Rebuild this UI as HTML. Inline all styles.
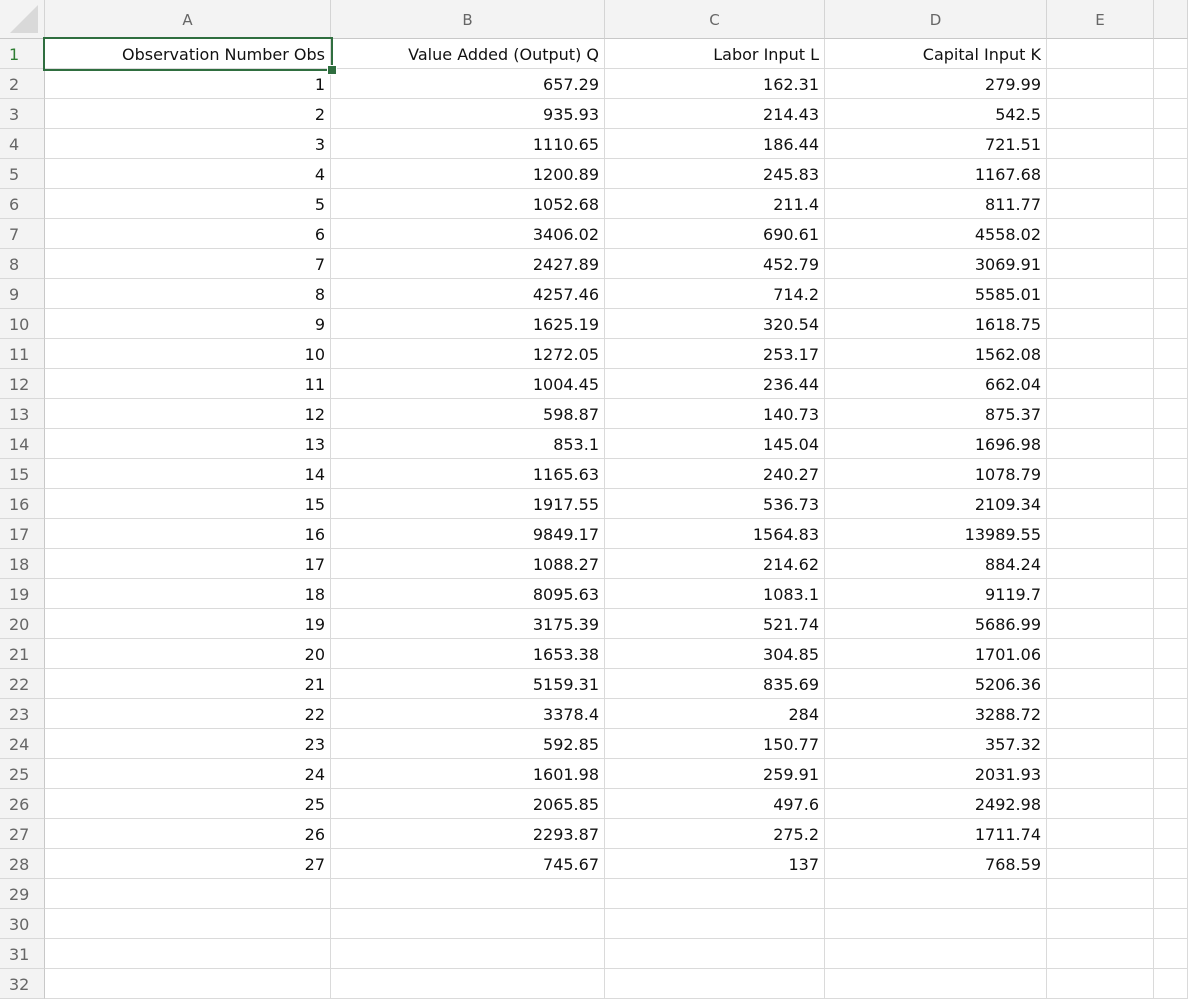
<!DOCTYPE html>
<html><head><style>
body{margin:0;width:1188px;height:1000px;overflow:hidden;background:#fff;font-family:"DejaVu Sans",sans-serif;position:relative}
.h{position:absolute;top:0;height:39px;background:#f3f3f3;border-right:1px solid #d4d4d4;border-bottom:1px solid #c8c8c8;box-sizing:border-box;text-align:center;line-height:40px;color:#666;font-size:15px}
.r{position:absolute;left:0;width:45px;height:30px;background:#f3f3f3;border-right:1px solid #c8c8c8;border-bottom:1px solid #d8d8d8;box-sizing:border-box;color:#666;font-size:16px;line-height:31px;padding-left:9px}
.c{position:absolute;height:30px;border-right:1px solid #dadada;border-bottom:1px solid #dadada;box-sizing:border-box;text-align:right;padding-right:5px;font-size:16px;line-height:31px;color:#111;white-space:nowrap}
</style></head><body>
<div id="g"></div>
<script>
var cols=[[45,331],[331,605],[605,825],[825,1047],[1047,1154],[1154,1188]];
var L=['A','B','C','D','E',''];
var h='<div class="h" style="left:0;width:45px"><svg width="45" height="39" style="position:absolute;left:0;top:0"><polygon points="10,33 38,33 38,5" fill="#d9d9d9"/></svg></div>';
cols.forEach(function(c,i){h+='<div class="h" style="left:'+c[0]+'px;width:'+(c[1]-c[0])+'px">'+L[i]+'</div>';});
var d=[["Observation Number Obs","Value Added (Output) Q","Labor Input L","Capital Input K"],
[1,657.29,162.31,279.99],[2,935.93,214.43,542.5],[3,1110.65,186.44,721.51],[4,1200.89,245.83,1167.68],[5,1052.68,211.4,811.77],[6,3406.02,690.61,4558.02],[7,2427.89,452.79,3069.91],[8,4257.46,714.2,5585.01],[9,1625.19,320.54,1618.75],[10,1272.05,253.17,1562.08],[11,1004.45,236.44,662.04],[12,598.87,140.73,875.37],[13,853.1,145.04,1696.98],[14,1165.63,240.27,1078.79],[15,1917.55,536.73,2109.34],[16,9849.17,1564.83,13989.55],[17,1088.27,214.62,884.24],[18,8095.63,1083.1,9119.7],[19,3175.39,521.74,5686.99],[20,1653.38,304.85,1701.06],[21,5159.31,835.69,5206.36],[22,3378.4,284,3288.72],[23,592.85,150.77,357.32],[24,1601.98,259.91,2031.93],[25,2065.85,497.6,2492.98],[26,2293.87,275.2,1711.74],[27,745.67,137,768.59]];
for(var r=0;r<32;r++){var y=39+r*30;
h+='<div class="r" style="top:'+y+'px;'+(r==0?'color:#2e7d32':'')+'">'+(r+1)+'</div>';
cols.forEach(function(c,i){var t=(d[r]&&i<4)?d[r][i]:'';h+='<div class="c" style="left:'+c[0]+'px;top:'+y+'px;width:'+(c[1]-c[0])+'px">'+t+'</div>';});}
h+='<div style="position:absolute;left:43px;top:37px;width:290px;height:34px;border:2px solid #2f6e3f;box-sizing:border-box"></div>';
h+='<div style="position:absolute;left:327px;top:65px;width:8px;height:8px;background:#2f6e3f;border:1px solid #fff"></div>';
document.getElementById('g').innerHTML=h;
</script>
</body></html>
